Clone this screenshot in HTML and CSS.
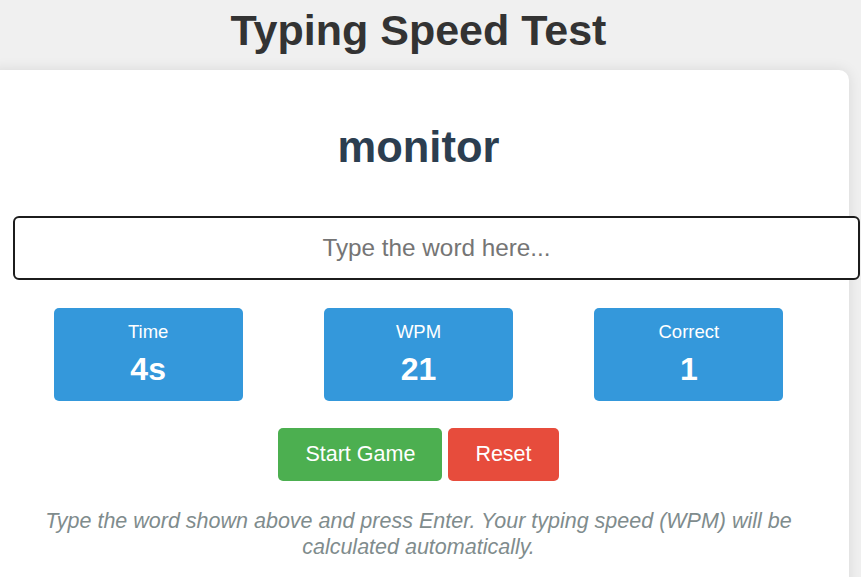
FILE: index.html
```html
<!DOCTYPE html>
<html lang="en">
<head>
<meta charset="utf-8">
<title>Typing Speed Test</title>
<link rel="stylesheet" href="styles.css">
</head>
<body>
<div class="page">
  <h1 class="title">Typing Speed Test</h1>
  <main class="card">
    <div class="word">monitor</div>
    <input class="entry" type="text" placeholder="Type the word here..." autofocus>
    <div class="stats">
      <div class="stat">
        <div class="stat-label">Time</div>
        <div class="stat-value">4s</div>
      </div>
      <div class="stat">
        <div class="stat-label">WPM</div>
        <div class="stat-value">21</div>
      </div>
      <div class="stat">
        <div class="stat-label">Correct</div>
        <div class="stat-value">1</div>
      </div>
    </div>
    <div class="actions">
      <button class="btn btn-start" type="button">Start Game</button>
      <button class="btn btn-reset" type="button">Reset</button>
    </div>
    <p class="hint">Type the word shown above and press Enter. Your typing speed (WPM) will be calculated automatically.</p>
  </main>
</div>
</body>
</html>
```
FILE: styles.css
```css
html, body {
  margin: 0;
  padding: 0;
  background: #f0f0f0;
  overflow: hidden;
  font-family: "Liberation Sans", Arial, sans-serif;
}
.page {
  width: 861px;
  margin-left: -12px;
}
.title {
  margin: 6px 0 15px;
  text-align: center;
  font-size: 43px;
  font-weight: bold;
  color: #333333;
}
.card {
  display: block;
  background: #ffffff;
  border-radius: 10px;
  box-shadow: 0 0 14px rgba(0, 0, 0, 0.1);
  padding: 25px 25px 30px;
  height: 600px;
}
.word {
  margin: 28px 0 44px;
  text-align: center;
  font-size: 43.5px;
  font-weight: bold;
  color: #2c3e50;
}
.entry {
  display: block;
  box-sizing: content-box;
  width: 100%;
  margin: 0;
  padding: 15px 16px;
  font-family: "Liberation Sans", Arial, sans-serif;
  font-size: 24.3px;
  line-height: 30px;
  height: 30px;
  text-align: center;
  color: #333;
  border: 2px solid #1c1c1c;
  border-radius: 6px;
  outline: none;
  background: #fff;
}
.entry::placeholder {
  color: #757575;
}
.stats {
  display: flex;
  justify-content: space-around;
  margin-top: 28px;
}
.stat {
  width: 189px;
  box-sizing: border-box;
  padding: 13px 10px 13px;
  background: #3498db;
  color: #ffffff;
  border-radius: 5px;
  text-align: center;
}
.stat-label {
  font-size: 18.5px;
}
.stat-value {
  margin-top: 8px;
  font-size: 32px;
  font-weight: bold;
}
.actions {
  display: flex;
  justify-content: center;
  gap: 6px;
  margin-top: 27px;
}
.btn {
  padding: 14px 27px;
  font-family: "Liberation Sans", Arial, sans-serif;
  font-size: 21.5px;
  line-height: 25px;
  color: #ffffff;
  border: none;
  border-radius: 5px;
  cursor: pointer;
}
.btn-start {
  background: #4caf50;
}
.btn-reset {
  background: #e74c3c;
}
.hint {
  margin: 27px 0 0;
  text-align: center;
  font-style: italic;
  font-size: 21.5px;
  line-height: 26px;
  color: #7f8c8d;
}
```
